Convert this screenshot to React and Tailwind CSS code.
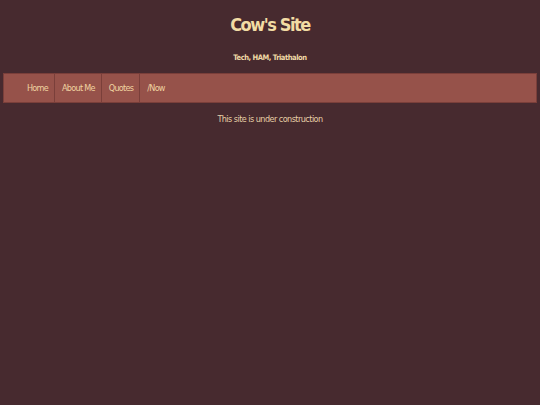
export default function App() {
  const items = ["Home", "About Me", "Quotes", "/Now"];
  return (
    <div
      className="min-h-[405px] w-full bg-[#472a2f] text-[#f0d9a6]"
      style={{ fontFamily: '"DejaVu Sans Condensed", "DejaVu Sans", sans-serif' }}
    >
      <header className="pt-[13px] text-center">
        <h1 className="text-[18px] font-bold leading-[24px] tracking-[-0.08em] text-[#f2dca4]">Cow's Site</h1>
        <p className="mt-[16px] text-[7.5px] font-bold leading-[10px] tracking-[-0.06em] text-[#f0d9a6]">
          Tech, HAM, Triathalon
        </p>
      </header>
      <nav className="mx-[3px] mt-[10px] flex h-[30px] items-stretch border border-[#7a3f3a] bg-[#96524a] pl-[16px]">
        {items.map((t, i) => (
          <div
            key={t}
            className={`flex items-center pl-[7px] pr-[6px] pt-[1px] text-[9px] tracking-[-0.08em] text-[#f0d3a0] ${
              i < items.length - 1 ? "border-r border-[#7a3f3a]" : ""
            }`}
          >
            {t}
          </div>
        ))}
      </nav>
      <p className="mt-[10px] text-center text-[9px] leading-[12px] tracking-[-0.06em] text-[#e6cfa6]">
        This site is under construction
      </p>
    </div>
  );
}
